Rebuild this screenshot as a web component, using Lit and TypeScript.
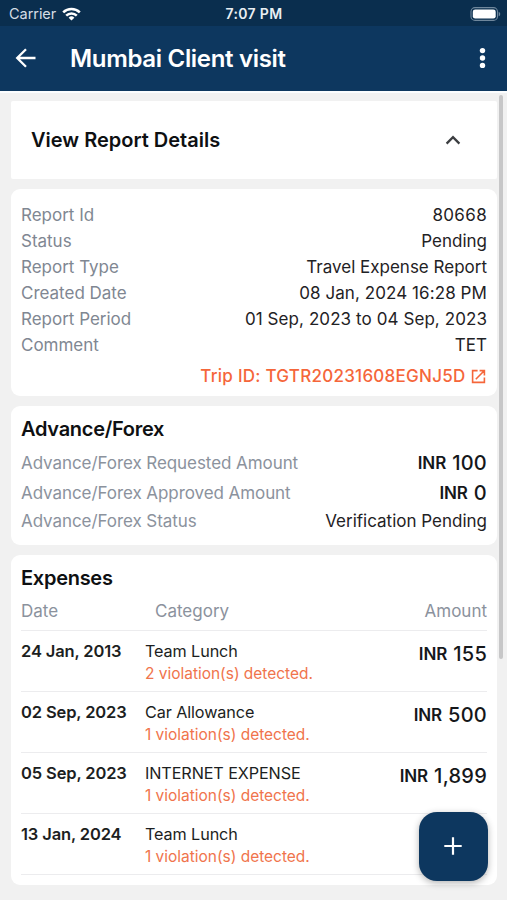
import { LitElement, html, css, nothing } from "lit";
import { customElement, property } from "lit/decorators.js";

interface Detail { label: string; value: string; kind?: string }
interface Expense { date: string; category: string; note: string; amount: string }

const DETAILS: Detail[] = [
  { label: "Report Id", value: "80668", kind: "ident" },
  { label: "Status", value: "Pending" },
  { label: "Report Type", value: "Travel Expense Report" },
  { label: "Created Date", value: "08 Jan, 2024 16:28 PM", kind: "numeric" },
  { label: "Report Period", value: "01 Sep, 2023 to 04 Sep, 2023", kind: "numeric" },
  { label: "Comment", value: "TET" },
];

const EXPENSES: Expense[] = [
  { date: "24 Jan, 2013", category: "Team Lunch", note: "2 violation(s) detected.", amount: "155" },
  { date: "02 Sep, 2023", category: "Car Allowance", note: "1 violation(s) detected.", amount: "500" },
  { date: "05 Sep, 2023", category: "INTERNET EXPENSE", note: "1 violation(s) detected.", amount: "1,899" },
  { date: "13 Jan, 2024", category: "Team Lunch", note: "1 violation(s) detected.", amount: "" },
];

@customElement("money-amount")
export class MoneyAmount extends LitElement {
  @property() value = "";
  static styles = css`
    :host { display: inline-flex; align-items: center; align-self: start; gap: 6px; color: #15171a; font-weight: 500; white-space: nowrap; line-height: 26px; }
    .currency { font-size: 17px; font-weight: 600; letter-spacing: -0.1px; }
    .number { font-size: 20px; letter-spacing: 0.25px; }
  `;
  render() {
    return html`<span class="currency">INR</span><span class="number">${this.value}</span>`;
  }
}

@customElement("app-root")
export class AppRoot extends LitElement {
  static styles = css`
    :host {
      display: flex; flex-direction: column; position: relative; box-sizing: border-box;
      width: 507px; height: 900px; overflow: hidden; background: #f1f1f1;
      font-family: Inter, "Liberation Sans", sans-serif; font-size: 17px; line-height: 26px; color: #1f2225;
    }
    * { box-sizing: border-box; }
    svg { display: block; flex: none; }
    .status {
      display: grid; grid-template-columns: 1fr auto 1fr; align-items: center; height: 26px; flex: none;
      padding: 1px 6px 0 9px; background: #0a2e4e; color: #e9eef3; font-size: 14.5px; line-height: 24px;
    }
    .carrier { display: flex; align-items: center; gap: 6px; letter-spacing: -0.05px; color: #d5dde5; }
    .clock { font-weight: 600; font-size: 14px; letter-spacing: 0.35px; margin-right: 2px; }
    .battery { justify-self: end; }
    .bar {
      display: flex; align-items: center; height: 67px; flex: none; padding: 0 21px 1px 15px;
      background: #0d375f; color: #fff; border-bottom: 2px solid #fbfdfe;
    }
    .title { flex: 1; margin-left: 34px; padding-top: 2px; font-size: 24px; font-weight: 600; line-height: 30px; letter-spacing: -0.32px; }
    .content { display: flex; flex-direction: column; gap: 10px; padding: 8px 10px 0 11px; }
    .card { background: #fff; border-radius: 9px; padding: 0 10px; }
    .toggle {
      display: flex; justify-content: space-between; align-items: center; height: 78px;
      border-radius: 2px; padding: 0 36px 0 20px; font-size: 20px; font-weight: 600; color: #0e1012;
    }
    .details { height: 207px; padding-top: 13px; }
    .row { display: flex; justify-content: space-between; align-items: center; height: 26px; }
    .label { color: #808792; letter-spacing: -0.01px; }
    .numeric { letter-spacing: 0.08px; }
    .ident { letter-spacing: 0.35px; }
    .trip {
      display: flex; justify-content: flex-end; align-items: center; gap: 5.5px; margin-top: 5px; padding-right: 1px;
      color: #f5663a; font-weight: 500; letter-spacing: 0.26px;
    }
    .advance { height: 139px; padding-top: 8px; }
    .advance .label { color: #8b929d; letter-spacing: -0.07px; }
    .heading { font-size: 20px; font-weight: 600; line-height: 30px; color: #0e1012; letter-spacing: -0.28px; }
    .tall { height: 30px; }
    .tall money-amount { align-self: center; }
    .rows { padding-top: 4px; }
    .expenses { height: 330px; padding-top: 8px; }
    .columns {
      display: grid; grid-template-columns: 134px 1fr auto; height: 38px; padding-top: 5px;
      color: #8b929d; border-bottom: 1px solid #ececee;
    }
    .expense {
      display: grid; grid-template-columns: 124px 1fr auto; height: 61px; padding-top: 9px;
      line-height: 22px; border-bottom: 1px solid #ececee; color: #1c1e21;
    }
    .date { font-weight: 600; font-size: 16.5px; letter-spacing: -0.13px; }
    .category { font-size: 16.2px; letter-spacing: -0.1px; }
    .note { color: #f0744c; font-size: 15.5px; line-height: 23px; letter-spacing: -0.02px; }
    .sum { padding-top: 1px; }
    .scroll { position: absolute; top: 95px; right: 4px; width: 4px; height: 564px; border-radius: 2px; background: #c7c7c8; }
    .fab {
      position: absolute; left: 419px; top: 812px; width: 68.5px; height: 68.5px; border: 0; padding: 0;
      border-radius: 18px; background: #0d375f; box-shadow: 0 2px 7px rgba(0, 0, 0, 0.3);
      display: grid; place-items: center;
    }
  `;

  private statusBar() {
    return html`<div class="status">
      <div class="carrier"><span>Carrier</span>
        <svg width="19" height="14" viewBox="0 0 19 14" fill="none" stroke="#fff" stroke-width="2.5">
          <path d="M1.2 5.4a11.8 11.8 0 0 1 16.6 0" /><path d="M4.2 8.6a7.5 7.5 0 0 1 10.6 0" />
          <path d="M9.5 13.6 6.6 10.8a4.1 4.1 0 0 1 5.8 0z" fill="#fff" stroke="none" />
        </svg>
      </div>
      <span class="clock">7:07 PM</span>
      <svg class="battery" width="31" height="14" viewBox="0 0 31 14">
        <rect x="1" y="0.6" width="26.5" height="12.8" rx="4" fill="none" stroke="#6f879c" stroke-width="1.1" />
        <rect x="2.8" y="2.4" width="22.9" height="9.2" rx="2.4" fill="#fff" />
        <path d="M28.7 4.7c2 .8 2 3.8 0 4.6z" fill="#6f879c" />
      </svg>
    </div>`;
  }

  render() {
    return html`
      ${this.statusBar()}
      <header class="bar">
        <svg width="21" height="20" viewBox="0 0 21 20" fill="none" stroke="#fff" stroke-width="2.3">
          <path d="M20.5 10H2.6M11 1.2 2.2 10 11 18.8" />
        </svg>
        <span class="title">Mumbai Client visit</span>
        <svg width="7" height="22" viewBox="0 0 7 22" fill="#fff">
          <circle cx="3.5" cy="3.6" r="2.7" /><circle cx="3.5" cy="11" r="2.7" /><circle cx="3.5" cy="18.4" r="2.7" />
        </svg>
      </header>
      <main class="content">
        <section class="card toggle">
          <span>View Report Details</span>
          <svg width="16" height="10" viewBox="0 0 16 10" fill="none" stroke="#3c3e41" stroke-width="2.3">
            <path d="M1.6 8.6 8 2.2l6.4 6.4" />
          </svg>
        </section>
        <section class="card details">
          ${DETAILS.map((d) => html`<div class="row"><span class="label">${d.label}</span><span class=${d.kind ?? "text"}>${d.value}</span></div>`)}
          <div class="trip"><span>Trip ID: TGTR20231608EGNJ5D</span>
            <svg width="15" height="15" viewBox="0 0 15 15" fill="none" stroke="#f5663a" stroke-width="1.6">
              <path d="M6.6 1.6H1.6v11.8h11.8V8.4M8.6 1.6h4.8v4.8M13.2 1.8 4.8 10.2" />
            </svg>
          </div>
        </section>
        <section class="card advance">
          <div class="heading">Advance/Forex</div>
          <div class="rows">
            <div class="row tall"><span class="label">Advance/Forex Requested Amount</span><money-amount value="100"></money-amount></div>
            <div class="row tall"><span class="label">Advance/Forex Approved Amount</span><money-amount value="0"></money-amount></div>
            <div class="row"><span class="label">Advance/Forex Status</span><span>Verification Pending</span></div>
          </div>
        </section>
        <section class="card expenses">
          <div class="heading">Expenses</div>
          <div class="columns"><span>Date</span><span>Category</span><span>Amount</span></div>
          ${EXPENSES.map((e) => html`<div class="expense">
            <span class="date">${e.date}</span>
            <div><div class="category">${e.category}</div><div class="note">${e.note}</div></div>
            ${e.amount ? html`<money-amount class="sum" value=${e.amount}></money-amount>` : nothing}
          </div>`)}
        </section>
      </main>
      <div class="scroll"></div>
      <button class="fab" aria-label="Add expense">
        <svg width="18" height="18" viewBox="0 0 18 18" stroke="#fff" stroke-width="2.2"><path d="M9 .3v17.4M.3 9h17.4" /></svg>
      </button>
    `;
  }
}
